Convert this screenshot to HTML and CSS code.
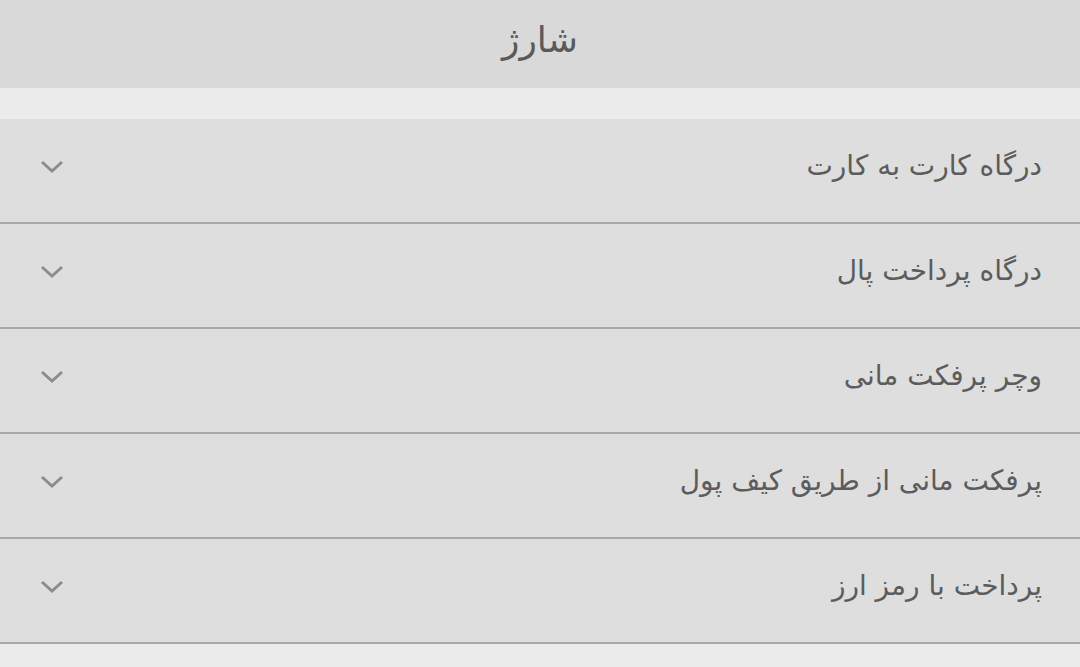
FILE: index.html
```html
<!DOCTYPE html>
<html lang="fa" dir="rtl">
<head>
<meta charset="utf-8">
<link rel="stylesheet" href="styles.css">
</head>
<body>
<header class="top"><h1 class="title">شارژ</h1></header>
<div class="band"></div>
<ul class="list">
  <li class="row"><span class="label">درگاه کارت به کارت</span><svg class="chev" viewBox="0 0 24 14" width="24" height="14"><path d="M2 2 L12 11 L22 2" fill="none" stroke="#8c8c8c" stroke-width="3"/></svg></li>
  <li class="row"><span class="label">درگاه پرداخت پال</span><svg class="chev" viewBox="0 0 24 14" width="24" height="14"><path d="M2 2 L12 11 L22 2" fill="none" stroke="#8c8c8c" stroke-width="3"/></svg></li>
  <li class="row"><span class="label">وچر پرفکت مانی</span><svg class="chev" viewBox="0 0 24 14" width="24" height="14"><path d="M2 2 L12 11 L22 2" fill="none" stroke="#8c8c8c" stroke-width="3"/></svg></li>
  <li class="row"><span class="label">پرفکت مانی از طریق کیف پول</span><svg class="chev" viewBox="0 0 24 14" width="24" height="14"><path d="M2 2 L12 11 L22 2" fill="none" stroke="#8c8c8c" stroke-width="3"/></svg></li>
  <li class="row"><span class="label">پرداخت با رمز ارز</span><svg class="chev" viewBox="0 0 24 14" width="24" height="14"><path d="M2 2 L12 11 L22 2" fill="none" stroke="#8c8c8c" stroke-width="3"/></svg></li>
</ul>
</body>
</html>
```

FILE: styles.css
```css
html, body {
  margin: 0;
  padding: 0;
  background: #ebebeb;
  font-family: "DejaVu Sans", "Noto Sans", sans-serif;
  color: #5c5c5c;
}
.top {
  height: 88px;
  background: #d9d9d9;
  display: flex;
  align-items: center;
  justify-content: center;
}
.title {
  margin: 0 0 10px 0;
  font-size: 36px;
  font-weight: normal;
  color: #5a5a5a;
}
.band {
  height: 31px;
}
.list {
  list-style: none;
  margin: 0;
  padding: 0;
}
.row {
  height: 103px;
  background: #dedede;
  border-bottom: 2px solid #a8a8a8;
  display: flex;
  align-items: center;
  justify-content: space-between;
  padding: 0 38px 0 40px;
  box-sizing: content-box;
}
.label {
  font-size: 28px;
  line-height: 1;
  margin-bottom: 10px;
}
.chev {
  margin-bottom: 8px;
}
```
